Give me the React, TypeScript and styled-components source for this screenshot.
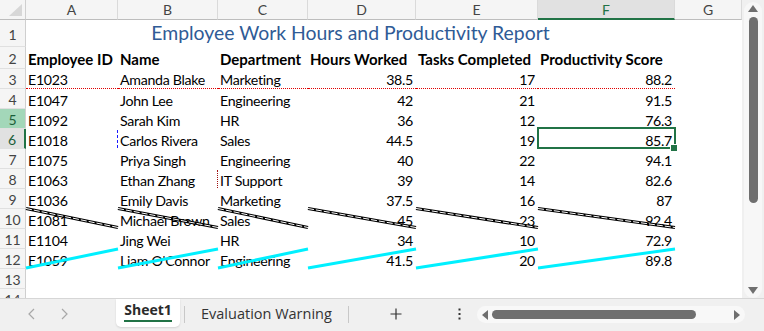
import React from "react";
import styled, { createGlobalStyle, css } from "styled-components";

const Global = createGlobalStyle`
  html, body { margin: 0; padding: 0; background: #fff; overflow: hidden; }
  * { box-sizing: border-box; }
`;

const FONT = `"Lato", "Liberation Sans", sans-serif`;
const GREEN = "#217346";

const COLS = [26, 92, 100, 90, 108, 122, 137, 67];
const ROWS = [20, 27, 22, 20, 20, 20, 20, 20, 20, 20, 20, 20, 20, 20, 20];

const data: [string, string, string, string, string, string][] = [
  ["E1023", "Amanda Blake", "Marketing", "38.5", "17", "88.2"],
  ["E1047", "John Lee", "Engineering", "42", "21", "91.5"],
  ["E1092", "Sarah Kim", "HR", "36", "12", "76.3"],
  ["E1018", "Carlos Rivera", "Sales", "44.5", "19", "85.7"],
  ["E1075", "Priya Singh", "Engineering", "40", "22", "94.1"],
  ["E1063", "Ethan Zhang", "IT Support", "39", "14", "82.6"],
  ["E1036", "Emily Davis", "Marketing", "37.5", "16", "87"],
  ["E1081", "Michael Brown", "Sales", "45", "23", "92.4"],
  ["E1104", "Jing Wei", "HR", "34", "10", "72.9"],
  ["E1059", "Liam O'Connor", "Engineering", "41.5", "20", "89.8"],
];

const headers = ["Employee ID", "Name", "Department", "Hours Worked", "Tasks Completed", "Productivity Score"];
const letters = ["A", "B", "C", "D", "E", "F", "G"];

const Frame = styled.div`
  width: 764px;
  height: 331px;
  display: flex;
  flex-direction: column;
  background: #f0f0f0;
  font-family: ${FONT};
  overflow: hidden;
`;

const Main = styled.div`
  display: flex;
  height: 299px;
  border-bottom: 1px solid #d6d6d6;
`;

const SheetArea = styled.div`
  position: relative;
  width: 742px;
  height: 298px;
  overflow: hidden;
  background: #fff;
`;

const Grid = styled.div`
  display: grid;
  grid-template-columns: ${COLS.map((c) => c + "px").join(" ")};
  grid-template-rows: ${ROWS.map((r) => r + "px").join(" ")};
`;

const Corner = styled.div`
  position: relative;
  background: #f5f5f5;
  border-right: 1px solid #cfcfcf;
  border-bottom: 1px solid #bdbdbd;
  &::after {
    content: "";
    position: absolute;
    right: 3px;
    bottom: 3px;
    width: 0;
    height: 0;
    border-left: 13px solid transparent;
    border-bottom: 12px solid #d7d7d7;
  }
`;

const ColHead = styled.div<{ $active?: boolean }>`
  display: flex;
  align-items: center;
  justify-content: center;
  background: ${(p) => (p.$active ? "#e1e1e1" : "#f5f5f5")};
  border-right: 1px solid #dadada;
  border-bottom: ${(p) => (p.$active ? `2px solid ${GREEN}` : "1px solid #bdbdbd")};
  color: ${(p) => (p.$active ? GREEN : "#444")};
  font-size: 14px;
  padding-top: ${(p) => (p.$active ? "1px" : "0")};
`;

const RowHead = styled.div<{ $mode?: "green" | "sel" }>`
  display: flex;
  align-items: center;
  justify-content: center;
  font-size: 14px;
  color: #444;
  background: #f5f5f5;
  border-right: 1px solid #cfcfcf;
  border-bottom: 1px solid #e0e0e0;
  padding-top: 2px;
  ${(p) =>
    p.$mode === "green" &&
    css`
      background: #a3d7b9;
      color: #1b5e3a;
    `}
  ${(p) =>
    p.$mode === "sel" &&
    css`
      background: #e1e1e1;
      color: #1b5e3a;
      border-right: 2px solid ${GREEN};
    `}
`;

const Title = styled.div`
  grid-column: 2 / span 6;
  display: flex;
  align-items: center;
  justify-content: center;
  font-size: 19.4px;
  color: #2f5b96;
  padding-bottom: 3px;
`;

const Cell = styled.div<{
  $num?: boolean;
  $bold?: boolean;
  $red?: boolean;
  $blueLeft?: boolean;
  $maroonLeft?: boolean;
  $sel?: boolean;
}>`
  position: relative;
  display: flex;
  align-items: center;
  justify-content: ${(p) => (p.$num ? "flex-end" : "flex-start")};
  padding: 2px ${(p) => (p.$num ? "3px" : "2px")} 0 2px;
  font-size: ${(p) => (p.$bold ? "15px" : "14.2px")};
  letter-spacing: ${(p) => (p.$bold ? "0" : "-0.3px")};
  font-weight: ${(p) => (p.$bold ? 700 : 400)};
  color: #000;
  white-space: nowrap;
  overflow: visible;
  ${(p) =>
    p.$red &&
    css`
      border-bottom: 1px dotted #e00000;
    `}
  ${(p) =>
    p.$blueLeft &&
    css`
      &::before {
        content: "";
        position: absolute;
        left: -1px;
        top: 1px;
        bottom: 1px;
        border-left: 1px dashed #1a1aff;
      }
    `}
  ${(p) =>
    p.$maroonLeft &&
    css`
      &::before {
        content: "";
        position: absolute;
        left: -1px;
        top: 1px;
        bottom: 1px;
        border-left: 1px dotted #a01010;
      }
    `}
  ${(p) =>
    p.$sel &&
    css`
      &::before {
        content: "";
        position: absolute;
        left: -1px;
        right: -1px;
        top: -2px;
        bottom: 0px;
        border: 2px solid ${GREEN};
      }
      &::after {
        content: "";
        position: absolute;
        right: -3px;
        bottom: -3px;
        width: 6px;
        height: 6px;
        background: ${GREEN};
        border: 1px solid #fff;
      }
    `}
`;

const Overlay = styled.svg`
  position: absolute;
  left: 0;
  top: 0;
  pointer-events: none;
`;

const VScroll = styled.div`
  flex: 1;
  position: relative;
  background: #f0f0f0;
  display: flex;
  flex-direction: column;
  align-items: center;
  padding: 2px 0 0;
`;

const Lane = styled.div`
  width: 18px;
  height: 296px;
  border-radius: 9px;
  background: #f7f7f7;
  display: flex;
  flex-direction: column;
  align-items: center;
  padding-top: 3px;
`;

const Thumb = styled.div<{ $h?: boolean }>`
  background: #6f6f6f;
  border-radius: 5px;
  ${(p) =>
    p.$h
      ? css`
          width: 204px;
          height: 9px;
        `
      : css`
          width: 9px;
          height: 186px;
        `}
`;

const Spacer = styled.div`
  flex: 1;
`;

const TabBar = styled.div`
  flex: 1;
  display: flex;
  align-items: flex-start;
  background: #f0f0f0;
  font-family: "Open Sans", "Noto Sans", sans-serif;
`;

const NavBtn = styled.div`
  width: 32px;
  height: 30px;
  display: flex;
  align-items: center;
  justify-content: center;
`;

const Nav = styled.div`
  display: flex;
  padding-left: 16px;
  width: 116px;
`;

const ActiveTab = styled.div`
  width: 64px;
  height: 28px;
  background: #fff;
  border-radius: 0 0 5px 5px;
  box-shadow: 0 1px 2px rgba(0, 0, 0, 0.12);
  display: flex;
  flex-direction: column;
  align-items: center;
  padding-top: 2px;
  font-size: 14px;
  font-weight: 700;
  color: #2b2b2b;
  span {
    line-height: 18px;
    border-bottom: 2px solid ${GREEN};
    padding-bottom: 1px;
  }
`;

const Sep = styled.div`
  width: 1px;
  height: 17px;
  background: #c8c8c8;
  margin-top: 7px;
`;

const Tab = styled.div`
  font-size: 14.5px;
  color: #333;
  padding: 5px 16px 0 16px;
`;

const IconBtn = styled.div<{ $w: number }>`
  width: ${(p) => p.$w}px;
  height: 30px;
  display: flex;
  align-items: center;
  justify-content: center;
`;

const HLane = styled.div`
  margin-top: 7px;
  width: 268px;
  height: 17px;
  border-radius: 9px;
  background: #f8f8f8;
  display: flex;
  align-items: center;
  padding: 0 5px;
  gap: 4px;
`;

function Arrow({ dir }: { dir: "l" | "r" | "u" | "d" }) {
  const pts = {
    l: "6,0 6,10 0,5",
    r: "0,0 0,10 6,5",
    u: "0,7 10,7 5,0",
    d: "0,0 10,0 5,7",
  }[dir];
  const vert = dir === "u" || dir === "d";
  return (
    <svg width={vert ? 10 : 6} height={vert ? 7 : 10} viewBox={vert ? "0 0 10 7" : "0 0 6 10"}>
      <polygon points={pts} fill="#6f6f6f" />
    </svg>
  );
}

const colEdges = [26, 118, 218, 308, 416, 538, 675];

export default function App() {
  const rows: React.ReactNode[] = [];
  rows.push(<Corner key="corner" />);
  letters.forEach((l) => rows.push(<ColHead key={"h" + l} $active={l === "F"}>{l}</ColHead>));
  rows.push(<RowHead key="r1">1</RowHead>);
  rows.push(<Title key="title">Employee Work Hours and Productivity Report</Title>);
  rows.push(<Cell key="g1" />);
  rows.push(<RowHead key="r2">2</RowHead>);
  headers.forEach((h, i) => rows.push(<Cell key={"hh" + i} $bold>{h}</Cell>));
  rows.push(<Cell key="g2" />);
  data.forEach((r, ri) => {
    const n = ri + 3;
    rows.push(
      <RowHead key={"r" + n} $mode={n === 5 ? "green" : n === 6 ? "sel" : undefined}>
        {n}
      </RowHead>
    );
    r.forEach((v, ci) =>
      rows.push(
        <Cell
          key={n + "-" + ci}
          $num={ci >= 3}
          $red={n === 3}
          $blueLeft={n === 6 && ci === 1}
          $maroonLeft={n === 8 && ci === 2}
          $sel={n === 6 && ci === 5}
        >
          {v}
        </Cell>
      )
    );
    rows.push(<Cell key={"g" + n} />);
  });
  [13, 14].forEach((n) => {
    rows.push(<RowHead key={"r" + n}>{n}</RowHead>);
    for (let i = 0; i < 7; i++) rows.push(<Cell key={n + "-" + i} />);
  });

  const segs = colEdges.slice(0, -1).map((x, i) => [x, colEdges[i + 1]]);

  return (
    <Frame>
      <Global />
      <Main>
        <SheetArea>
          <Grid>{rows}</Grid>
          <Overlay width={742} height={298}>
            {segs.map(([a, b], i) => (
              <g key={"b" + i}>
                <line x1={a} y1={208.5} x2={b} y2={227.5} stroke="#000" strokeWidth={3} />
                <line x1={a} y1={208.5} x2={b} y2={227.5} stroke="#fff" strokeWidth={1} strokeDasharray="6 2" />
              </g>
            ))}
            {segs.map(([a, b], i) => (
              <line key={"c" + i} x1={a} y1={268} x2={b} y2={249} stroke="#00f0ff" strokeWidth={3} />
            ))}
          </Overlay>
        </SheetArea>
        <VScroll>
          <Lane>
            <Arrow dir="u" />
            <div style={{ height: 5 }} />
            <Thumb />
            <Spacer />
            <Arrow dir="d" />
            <div style={{ height: 4 }} />
          </Lane>
        </VScroll>
      </Main>
      <TabBar>
        <Nav>
          <NavBtn>
            <svg width="8" height="12" viewBox="0 0 8 12">
              <polyline points="6,1 1,6 6,11" fill="none" stroke="#a8a8a8" strokeWidth="1.2" />
            </svg>
          </NavBtn>
          <NavBtn>
            <svg width="8" height="12" viewBox="0 0 8 12">
              <polyline points="2,1 7,6 2,11" fill="none" stroke="#a8a8a8" strokeWidth="1.2" />
            </svg>
          </NavBtn>
        </Nav>
        <ActiveTab>
          <span>Sheet1</span>
        </ActiveTab>
        <Sep style={{ marginLeft: 4 }} />
        <Tab>Evaluation Warning</Tab>
        <Sep />
        <IconBtn $w={94}>
          <svg width="12" height="12" viewBox="0 0 12 12">
            <path d="M6 0.5v11M0.5 6h11" stroke="#333" strokeWidth="1.2" />
          </svg>
        </IconBtn>
        <IconBtn $w={34}>
          <svg width="3" height="12" viewBox="0 0 3 12">
            <rect x="0.5" y="0.5" width="2" height="2" fill="#333" />
            <rect x="0.5" y="5" width="2" height="2" fill="#333" />
            <rect x="0.5" y="9.5" width="2" height="2" fill="#333" />
          </svg>
        </IconBtn>
        <HLane>
          <Arrow dir="l" />
          <Thumb $h />
          <Spacer />
          <Arrow dir="r" />
        </HLane>
      </TabBar>
    </Frame>
  );
}
